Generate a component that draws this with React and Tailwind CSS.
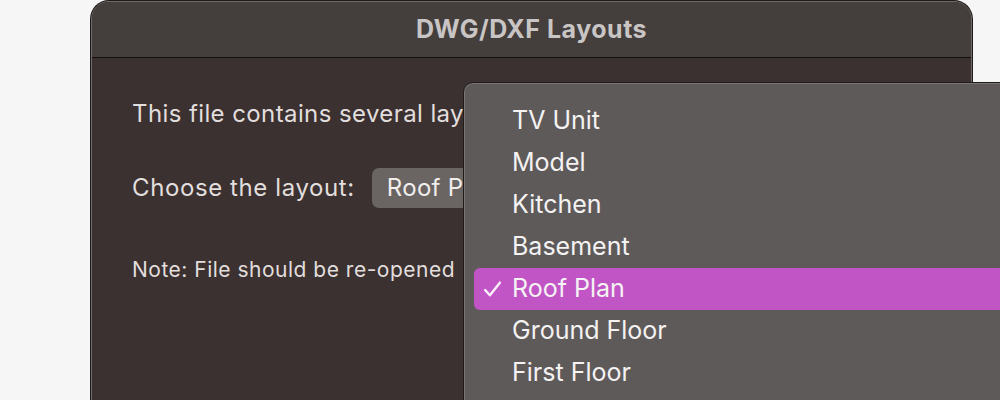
const items = ["TV Unit", "Model", "Kitchen", "Basement", "Roof Plan", "Ground Floor", "First Floor"];

function Check() {
  return (
    <svg width="19" height="19" viewBox="0 0 18 18" fill="none" className="absolute left-[9px] top-[12px]">
      <path d="M2 9.5l4.5 5L16 2.5" stroke="#fbeefc" strokeWidth="2.3" strokeLinecap="round" strokeLinejoin="round" />
    </svg>
  );
}

export default function App() {
  return (
    <div
      className="relative h-[400px] w-[1000px] overflow-hidden bg-[#f6f6f6]"
      style={{ fontFamily: "Inter, 'Liberation Sans', sans-serif" }}
    >
      <div className="ml-[91px] mt-px h-[430px] w-[881px] overflow-hidden rounded-t-[18px] border border-[#6f6a69] bg-[#3a3130] shadow-[0_0_0_1px_#1e1a1a]">
        <div className="flex h-[56px] items-center justify-center border-b border-[#141010] bg-[#443e3d]">
          <span className="text-[25px] font-bold tracking-[0.5px] text-[#c9c5c4]">DWG/DXF Layouts</span>
        </div>
        <div className="flex flex-col pl-[40px] pt-[40px] text-[#e2dedd]">
          <p className="text-[24px] leading-[32px] tracking-[0.4px]">This file contains several layouts</p>
          <div className="mt-[38px] flex items-center gap-[17px]">
            <span className="text-[24px] tracking-[0.6px]">Choose the layout:</span>
            <div className="flex h-[40px] w-[140px] items-center rounded-[7px] bg-[#6a6463] pl-[15px] text-[24px] tracking-[0.3px] text-[#f0eded]">
              Roof Plan
            </div>
          </div>
          <p className="mt-[49px] text-[21px] leading-[26px] tracking-[0.5px] text-[#e2dedd]">Note: File should be re-opened</p>
        </div>
      </div>

      <div className="absolute left-[463px] top-[82px] h-[340px] w-[560px] rounded-[10px] border border-[#1f1b1b] bg-[#5e5a5a] px-[10px] pt-[17px] shadow-[inset_0_0_0_1px_#7a7676]">
        {items.map((it) => (
          <div
            key={it}
            className={
              "relative flex h-[42px] items-center rounded-[6px] pl-[38px] text-[25px] text-[#f4f2f2] " +
              (it === "Roof Plan" ? "bg-[#c155c6]" : "")
            }
          >
            {it === "Roof Plan" && <Check />}
            {it}
          </div>
        ))}
      </div>
    </div>
  );
}
